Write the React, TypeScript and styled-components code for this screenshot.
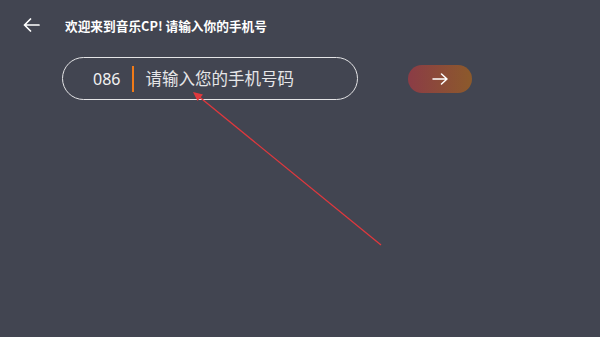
import React from "react";
import styled, { createGlobalStyle } from "styled-components";

const Global = createGlobalStyle`
  html, body { margin: 0; padding: 0; background: #424551; }
  body { font-family: "Noto Sans", "Noto Sans CJK SC", sans-serif; }
`;

const Page = styled.div`
  position: relative;
  width: 600px;
  height: 337px;
  background: #424551;
  overflow: hidden;
`;

const Header = styled.div`
  display: flex;
  align-items: center;
  height: 50px;
  padding-left: 22px;
`;

const BackButton = styled.div`
  width: 18px;
  height: 18px;
  display: flex;
  align-items: center;
  justify-content: center;
  margin-right: 25px;
`;

const Title = styled.div`
  color: #ffffff;
  font-family: "Noto Sans CJK SC", sans-serif;
  font-weight: 700;
  font-size: 12.7px;
  letter-spacing: 0;
`;

const FormRow = styled.div`
  display: flex;
  align-items: center;
  margin-top: 7px;
  padding-left: 62px;
`;

const InputPill = styled.div`
  box-sizing: border-box;
  width: 296px;
  height: 43px;
  border: 1px solid #e4e4e6;
  border-radius: 22px;
  display: flex;
  align-items: center;
  padding-left: 30px;
`;

const Code = styled.span`
  color: #f2f2f2;
  font-family: "Noto Sans", sans-serif;
  font-size: 16px;
`;

const Divider = styled.span`
  width: 2px;
  height: 26px;
  background: #f07a18;
  margin-left: 12px;
  margin-right: 11px;
`;

const Placeholder = styled.span`
  color: #e6e6e8;
  font-family: "Noto Sans CJK SC", sans-serif;
  font-size: 16.5px;
  margin-top: -2px;
`;

const NextButton = styled.div`
  margin-left: 50px;
  width: 64px;
  height: 28px;
  border-radius: 14px;
  background: linear-gradient(90deg, #8b3c46 0%, #8c5a2b 100%);
  display: flex;
  align-items: center;
  justify-content: center;
`;

const Overlay = styled.svg`
  position: absolute;
  left: 0;
  top: 0;
  pointer-events: none;
`;

export default function App() {
  return (
    <Page>
      <Global />
      <Header>
        <BackButton>
          <svg width="17" height="14" viewBox="0 0 17 14">
            <path d="M1.5 7 H16 M7.5 1 L1.5 7 L7.5 13" fill="none" stroke="#fff" strokeWidth="1.7" strokeLinecap="round" strokeLinejoin="round" />
          </svg>
        </BackButton>
        <Title>欢迎来到音乐CP! 请输入你的手机号</Title>
      </Header>
      <FormRow>
        <InputPill>
          <Code>086</Code>
          <Divider />
          <Placeholder>请输入您的手机号码</Placeholder>
        </InputPill>
        <NextButton>
          <svg width="16" height="12" viewBox="0 0 16 12">
            <path d="M1 6 H15 M9.5 1 L15 6 L9.5 11" fill="none" stroke="#fff" strokeWidth="1.5" strokeLinecap="round" strokeLinejoin="round" />
          </svg>
        </NextButton>
      </FormRow>
      <Overlay width="600" height="337" viewBox="0 0 600 337">
        <line x1="381" y1="245" x2="197" y2="95" stroke="#e0383d" strokeWidth="1.3" />
        <polygon points="193,92 203,94.5 197.5,101" fill="#e0383d" />
      </Overlay>
    </Page>
  );
}
